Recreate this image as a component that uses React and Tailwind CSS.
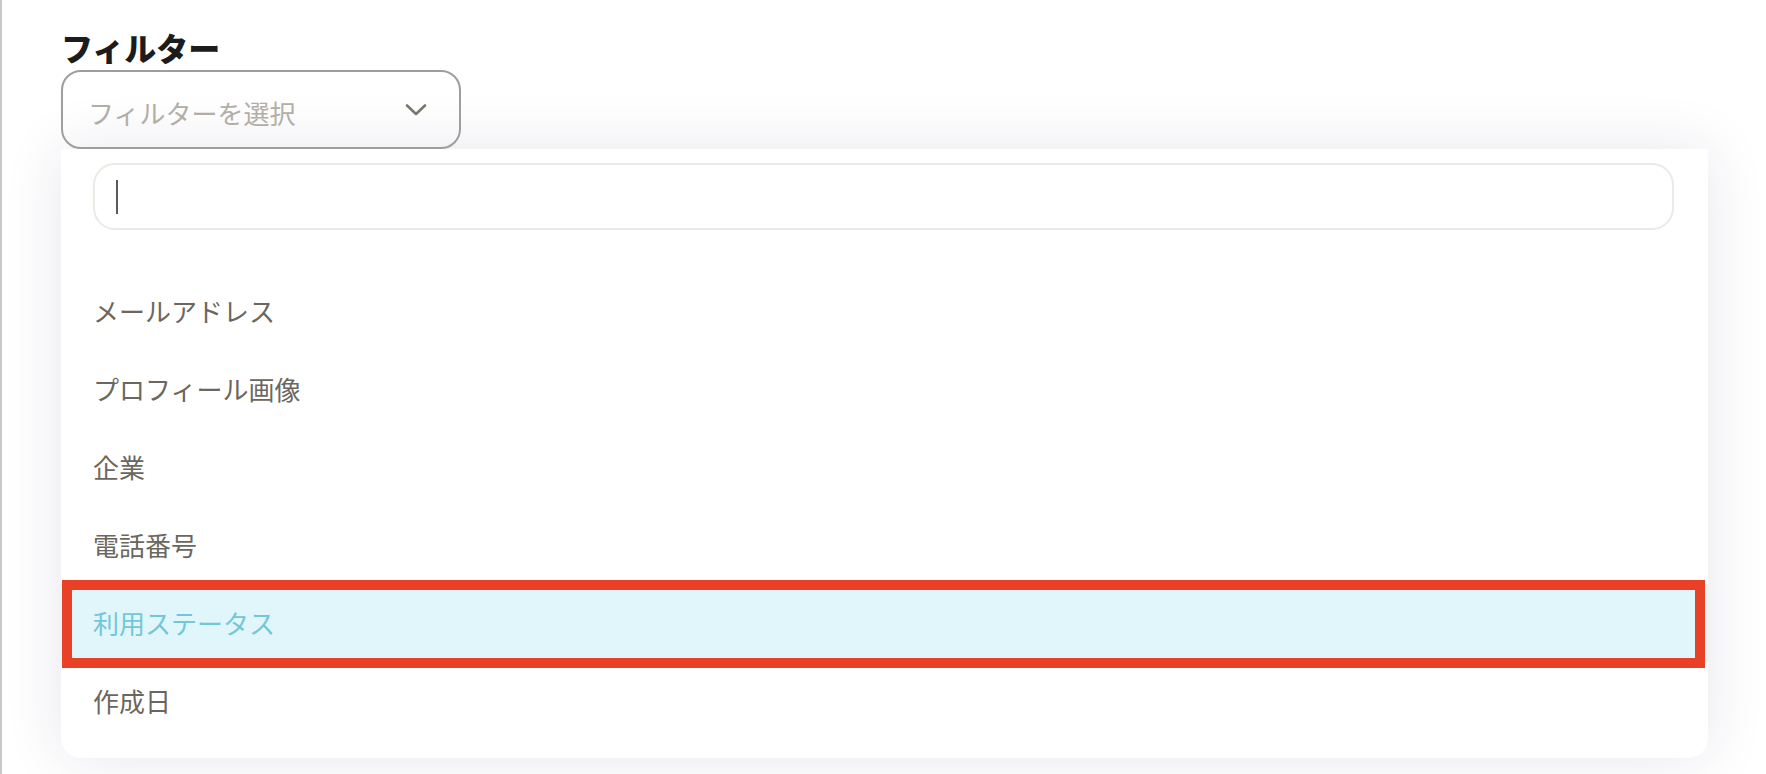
import React from "react";

const items = [
  "メールアドレス",
  "プロフィール画像",
  "企業",
  "電話番号",
  "利用ステータス",
  "作成日",
];

export default function App() {
  return (
    <div className="h-screen w-full overflow-hidden bg-white border-l-2 border-[#c8c8c8] font-['Noto_Sans_CJK_JP','Noto_Sans',sans-serif]">
      <div className="pl-[59px] pt-[28px]">
        <h2 className="text-[32px] leading-[38px] font-extrabold text-[#1c1c1c] mb-[4px]">
          フィルター
        </h2>
        <div className="w-[1647px]">
          <button className="relative z-10 flex h-[79px] w-[400px] items-center justify-between rounded-[20px] border-2 border-[#9e9e9e] bg-transparent pl-[25px] pr-[32px]">
            <span className="text-[26px] leading-[32px] text-[#b3aea5] pt-[7px]">
              フィルターを選択
            </span>
            <svg width="22" height="14" viewBox="0 0 22 14" fill="none">
              <path
                d="M2 2.5 L11 11 L20 2.5"
                stroke="#7b766c"
                strokeWidth="2.6"
                strokeLinecap="round"
                strokeLinejoin="round"
              />
            </svg>
          </button>
          <div className="rounded-b-[20px] bg-white pt-[14px] pb-[18px] shadow-[0_0_60px_0_rgba(40,30,80,0.11)]">
            <div className="pl-[32px] pr-[34px]">
              <div className="flex h-[67px] items-center rounded-[22px] border-2 border-[#ede9e4] pl-[21px]">
                <span className="block h-[34px] w-[2px] bg-[#5a5a5a]" />
              </div>
            </div>
            <div className="mt-[42px] flex flex-col">
              {items.map((label) =>
                label === "利用ステータス" ? (
                  <div
                    key={label}
                    className="relative flex h-[78px] items-center bg-[#f2f2f4] pl-[32px]"
                  >
                    <div className="absolute left-[1px] right-[3px] top-[-4px] bottom-[-6px] border-[10px] border-[#e94128] bg-[#e0f6fb]" />
                    <span className="relative text-[26px] leading-[32px] text-[#72c7d8]">
                      {label}
                    </span>
                  </div>
                ) : (
                  <div
                    key={label}
                    className="flex h-[78px] items-center pl-[32px]"
                  >
                    <span className="text-[26px] leading-[32px] text-[#6b675f]">
                      {label}
                    </span>
                  </div>
                )
              )}
            </div>
          </div>
        </div>
      </div>
    </div>
  );
}
